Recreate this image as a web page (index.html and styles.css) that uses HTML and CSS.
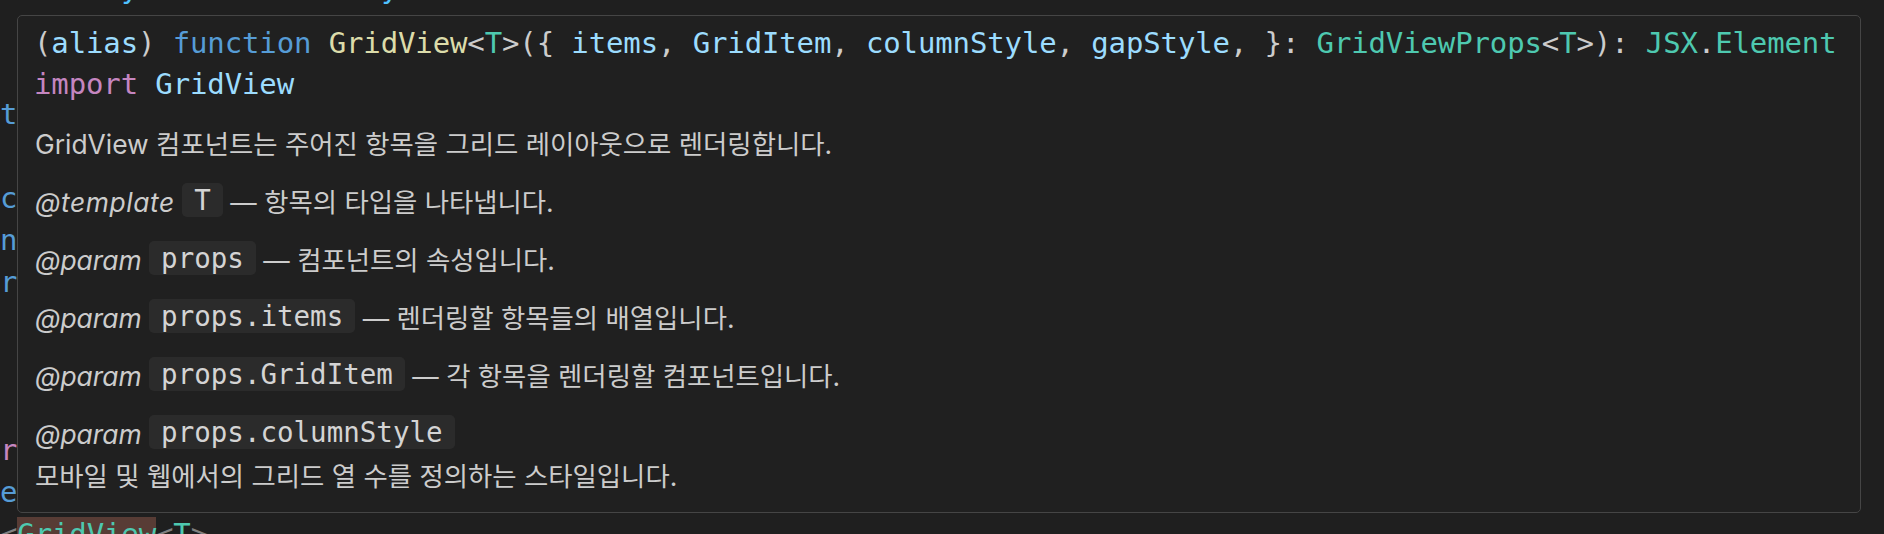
FILE: index.html
```html
<!DOCTYPE html>
<html lang="ko">
<head>
<meta charset="utf-8">
<title>GridView hover</title>
<link rel="stylesheet" href="styles.css">
</head>
<body>
<div class="editor">
<div class="ln"><span class="var">       y              y</span></div>
<div class="ln"> </div>
<div class="ln"> </div>
<div class="ln"><span class="kw">t</span></div>
<div class="ln"> </div>
<div class="ln"><span class="kw">c</span></div>
<div class="ln"><span class="kw">n</span></div>
<div class="ln"><span class="kw">r</span></div>
<div class="ln"> </div>
<div class="ln"> </div>
<div class="ln"> </div>
<div class="ln"><span class="ctl">r</span></div>
<div class="ln"><span class="kw">e</span></div>
<div class="ln"><span class="tag">&lt;</span><span class="hl type">GridView</span><span class="tag">&lt;</span><span class="type">T</span><span class="tag">&gt;</span></div>
</div>

<div class="hover">
  <div class="sig">
    <div class="cl"><span class="p">(</span><span class="var">alias</span><span class="p">) </span><span class="kw">function</span> <span class="fn">GridView</span><span class="p">&lt;</span><span class="type">T</span><span class="p">&gt;({ </span><span class="var">items</span><span class="p">, </span><span class="var">GridItem</span><span class="p">, </span><span class="var">columnStyle</span><span class="p">, </span><span class="var">gapStyle</span><span class="p">, }: </span><span class="type">GridViewProps</span><span class="p">&lt;</span><span class="type">T</span><span class="p">&gt;): </span><span class="type">JSX</span><span class="p">.</span><span class="type">Element</span></div>
    <div class="cl"><span class="ctl">import</span> <span class="var">GridView</span></div>
  </div>
  <div class="doc">
    <p>GridView 컴포넌트는 주어진 항목을 그리드 레이아웃으로 렌더링합니다.</p>
    <p><em class="wide">@template</em> <code>T</code> — 항목의 타입을 나타냅니다.</p>
    <p><em>@param</em> <code>props</code> — 컴포넌트의 속성입니다.</p>
    <p><em>@param</em> <code>props.items</code> — 렌더링할 항목들의 배열입니다.</p>
    <p><em>@param</em> <code>props.GridItem</code> — 각 항목을 렌더링할 컴포넌트입니다.</p>
    <p><em>@param</em> <code>props.columnStyle</code><br>모바일 및 웹에서의 그리드 열 수를 정의하는 스타일입니다.</p>
  </div>
</div>
</body>
</html>
```
FILE: styles.css
```css
html, body {
  margin: 0;
  padding: 0;
}
body {
  width: 1884px;
  height: 534px;
  overflow: hidden;
  background: #1f1f1f;
  position: relative;
}
.editor {
  margin-top: -33px;
  font-family: "DejaVu Sans Mono", monospace;
  font-size: 29px;
  letter-spacing: -0.13px;
  line-height: 42px;
  color: #cccccc;
}
.ln {
  height: 42px;
  white-space: pre;
}
.kw { color: #569cd6; }
.var { color: #9cdcfe; }
.editor .var { color: #4fc1ff; }
.ctl { color: #c586c0; }
.fn { color: #dcdcaa; }
.type { color: #4ec9b0; }
.tag { color: #808080; }
.p { color: #cccccc; }
.hl { background: #583c35; }

.hover {
  position: absolute;
  left: 17px;
  top: 15px;
  width: 1844px;
  height: 498px;
  box-sizing: border-box;
  border: 1px solid #454545;
  border-radius: 5px;
  background: #202020;
  padding: 7px 0 0 16px;
}
.sig {
  font-family: "DejaVu Sans Mono", monospace;
  font-size: 29px;
  letter-spacing: -0.13px;
  line-height: 41px;
}
.cl {
  white-space: pre;
}
.doc {
  padding: 18px 0 0 1px;
  font-family: "Inter", "Noto Sans CJK KR", sans-serif;
  font-size: 26.4px;
  line-height: 42px;
  color: #cccccc;
}
.doc p {
  margin: 0 0 16px 0;
}
.doc em {
  font-style: italic;
}
.doc em.wide {
  letter-spacing: 0.6px;
}
.doc code {
  display: inline-block;
  font-family: "DejaVu Sans Mono", monospace;
  font-size: 27.5px;
  line-height: 34px;
  padding: 0 12px;
  vertical-align: 2.5px;
  background: #2b2b2b;
  border-radius: 5px;
  color: #d4d4d4;
}
```
